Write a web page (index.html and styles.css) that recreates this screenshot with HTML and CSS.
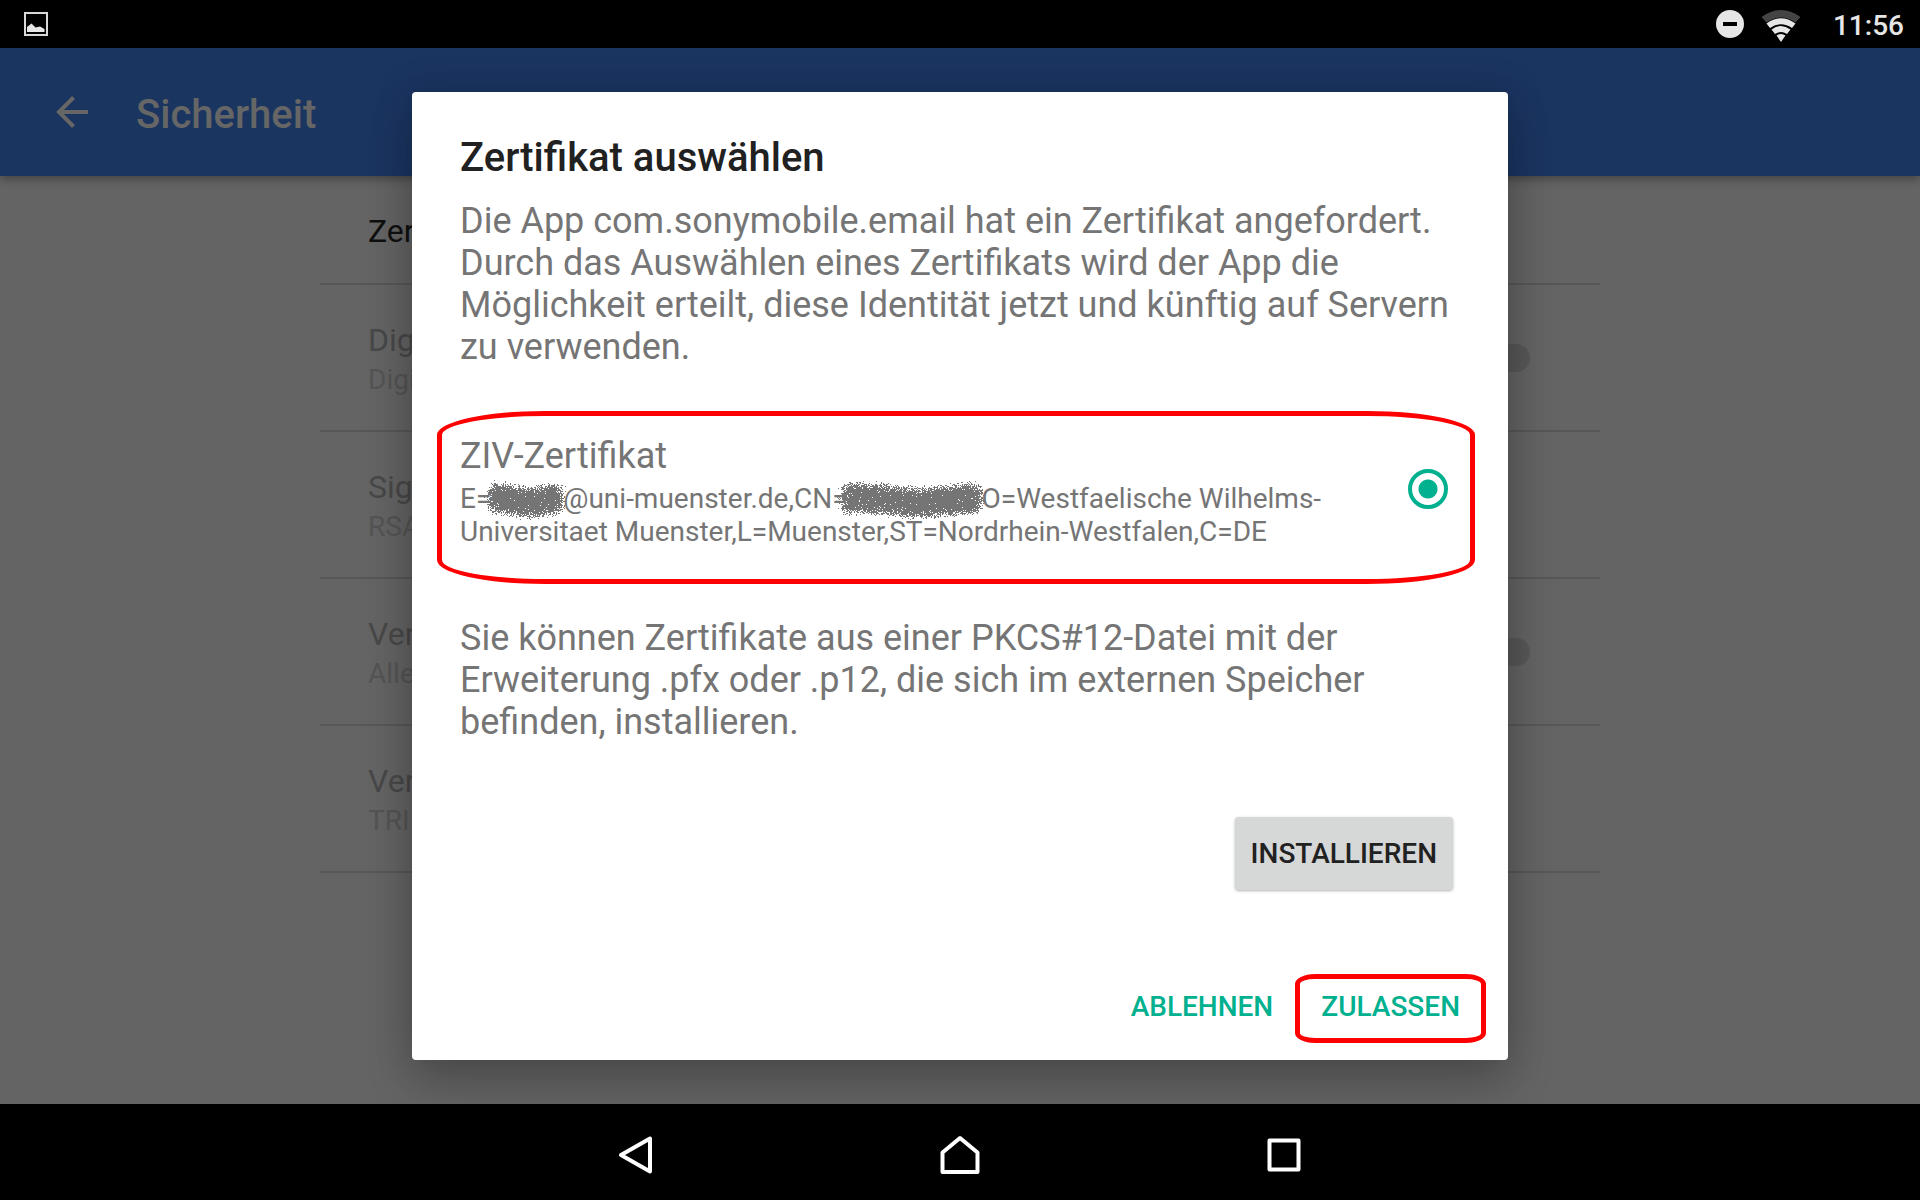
FILE: index.html
```html
<!DOCTYPE html>
<html lang="de">
<head>
<meta charset="utf-8">
<meta name="viewport" content="width=device-width, initial-scale=1">
<title>Sicherheit</title>
<link rel="stylesheet" href="styles.css">
</head>
<body>
<div class="status-bar">
  <svg width="24" height="24" viewBox="0 0 24 24" aria-hidden="true">
    <rect x="1" y="1" width="22" height="22" fill="none" stroke="#d8d8d8" stroke-width="2"/>
    <path d="M3 20V15L7.500 11.500 11.500 15.500 16 14.500 20.500 17V20Z" fill="#e6e6e6"/>
  </svg>
  <div class="status-icons">
    <svg width="28" height="28" viewBox="0 0 28 28" aria-hidden="true">
      <circle cx="14" cy="14" r="14" fill="#e6e6e6"/>
      <rect x="7" y="12" width="14" height="4" fill="#000"/>
    </svg>
    <svg class="wifi" width="40" height="32" viewBox="0 0 40 32" aria-hidden="true">
      <path d="M0.500 7Q20-7 39.500 7L34.500 12.500Q20 2.500 5.500 12.500Z" fill="#444"/>
      <path d="M5.500 13.500Q20 3 34.500 13.500L31 18Q20 10.500 9 18Z" fill="#e6e6e6"/>
      <path d="M10.500 19.500Q20 12.500 29.500 19.500L26 24Q20 20 14 24Z" fill="#e6e6e6"/>
      <path d="M15.500 25.500Q20 22.500 24.500 25.500L20 32Z" fill="#e6e6e6"/>
    </svg>
    <time class="clock">11:56</time>
  </div>
</div>

<div class="screen">
  <header class="app-bar">
    <button class="back" type="button" aria-label="Zurück">
      <svg width="32" height="32" viewBox="0 0 32 32" aria-hidden="true"><path d="M32 16H3M17.500 1.500L3 16 17.500 30.500" fill="none" stroke="#666" stroke-width="4"/></svg>
    </button>
    <h1 class="app-title">Sicherheit</h1>
  </header>
  <main class="settings">
    <h2 class="section">Zer</h2>
    <div class="setting"><div><p class="name">Dig</p><p class="hint">Digi</p></div><span class="switch"></span></div>
    <div class="setting"><div><p class="name">Sig</p><p class="hint">RSA</p></div></div>
    <div class="setting"><div><p class="name">Ver</p><p class="hint">Alle</p></div><span class="switch"></span></div>
    <div class="setting"><div><p class="name">Ver</p><p class="hint">TRI</p></div></div>
  </main>

  <div class="overlay">
    <section class="dialog" role="dialog" aria-labelledby="dialog-title">
      <h2 class="dialog-title" id="dialog-title">Zertifikat auswählen</h2>
      <p class="text">Die App com.sonymobile.email hat ein Zertifikat angefordert. Durch das Auswählen eines Zertifikats wird der App die Möglichkeit erteilt, diese Identität jetzt und künftig auf Servern zu verwenden.</p>
      <label class="option" for="cert">
        <span class="option-text">
          <span class="option-name">ZIV-Zertifikat</span>
          <span class="option-detail">E=<span class="redacted short"><canvas width="84" height="40"></canvas></span>@uni-muenster.de,CN=<span class="redacted long"><canvas width="150" height="40"></canvas></span>O=Westfaelische Wilhelms-Universitaet Muenster,L=Muenster,ST=Nordrhein-Westfalen,C=DE</span>
        </span>
        <input class="radio" id="cert" type="radio" name="cert" checked>
      </label>
      <p class="text">Sie können Zertifikate aus einer PKCS#12-Datei mit der Erweiterung .pfx oder .p12, die sich im externen Speicher befinden, installieren.</p>
      <button class="install" type="button">INSTALLIEREN</button>
      <div class="actions">
        <button class="action" type="button">ABLEHNEN</button>
        <button class="action marked" type="button">ZULASSEN</button>
      </div>
    </section>
  </div>
</div>

<nav class="nav-bar">
  <button type="button" aria-label="Zurück"><svg width="40" height="40" viewBox="0 0 40 40" aria-hidden="true"><path d="M34 3.500V36.500L5 20Z"/></svg></button>
  <button type="button" aria-label="Startbildschirm"><svg width="40" height="40" viewBox="0 0 40 40" aria-hidden="true"><path d="M2.500 17.500L20 3 37.500 17.500V37H2.500Z"/></svg></button>
  <button type="button" aria-label="Übersicht"><svg width="40" height="40" viewBox="0 0 40 40" aria-hidden="true"><path d="M5.500 5.500H34.500V34.500H5.500Z"/></svg></button>
</nav>
<script src="redact.js"></script>
</body>
</html>
```
FILE: styles.css
```css
* { box-sizing: border-box; }

body {
  margin: 0;
  min-height: 100vh;
  display: grid;
  grid-template-rows: 48px 1fr 96px;
  background: #000;
  font-family: Roboto, "Liberation Sans", sans-serif;
}

h1, h2, p { margin: 0; font-weight: 400; }

button {
  margin: 0;
  padding: 0;
  border: 0;
  background: none;
  font-family: inherit;
}

svg { display: block; }

.status-bar {
  display: flex;
  align-items: center;
  justify-content: space-between;
  padding: 0 16px 0 24px;
}

.status-icons { display: flex; align-items: center; }
.wifi { margin: 4px 32px 0 17px; }

.clock {
  color: #e6e6e6;
  font-size: 28px;
  font-weight: 500;
  line-height: 32px;
  padding-top: 3px;
}

.screen {
  position: relative;
  overflow: hidden;
  background: #646464;
}

.app-bar {
  display: flex;
  align-items: center;
  gap: 48px;
  height: 128px;
  padding: 0 56px;
  background: #1b3561;
  box-shadow: 0 2px 10px rgba(0, 0, 0, 0.4);
}

.app-title {
  color: #666;
  font-size: 40px;
  font-weight: 500;
  line-height: 48px;
  padding-top: 5px;
}

.settings {
  width: 66.667%;
  margin: 0 auto;
}

.section {
  height: 109px;
  padding: 36px 48px 0;
  border-bottom: 2px solid #575757;
  color: #101010;
  font-size: 32px;
  line-height: 38px;
}

.setting {
  display: flex;
  align-items: center;
  justify-content: space-between;
  height: 147px;
  padding: 0 70px 0 48px;
  border-bottom: 2px solid #575757;
}

.name {
  padding-top: 4px;
  color: #484848;
  font-size: 32px;
  line-height: 40px;
}

.hint {
  color: #545454;
  font-size: 28px;
  line-height: 40px;
}

.switch {
  width: 56px;
  height: 28px;
  border-radius: 14px;
  background: #585858;
}

.overlay {
  position: absolute;
  inset: 0;
  display: grid;
  place-items: center;
}

.dialog {
  display: flex;
  flex-direction: column;
  width: 1096px;
  max-width: 92%;
  padding: 41px 48px 18px;
  border-radius: 4px;
  background: #fff;
  box-shadow: 0 0 40px rgba(0, 0, 0, 0.16), 0 24px 48px rgba(0, 0, 0, 0.2);
}

.dialog-title {
  margin-bottom: 17px;
  color: #212121;
  font-size: 40px;
  font-weight: 500;
  line-height: 50px;
}

.text, .option-name {
  color: #757575;
  font-size: 36px;
  line-height: 42px;
}

.option {
  position: relative;
  display: flex;
  align-items: center;
  justify-content: space-between;
  margin: 44px 0 45px;
  padding: 23px 12px 24px 0;
}

.option::after,
.marked::after {
  content: "";
  position: absolute;
  border: 5px solid #f00;
  pointer-events: none;
}

.option::after {
  inset: -1px -15px -12px -23px;
  border-radius: 108px / 24px;
}

.option-text { flex: 0 1 900px; }
.option-name { display: block; }

.option-detail {
  display: block;
  padding-top: 5px;
  color: #757575;
  font-size: 28px;
  line-height: 33px;
}

.redacted {
  position: relative;
  display: inline-block;
  height: 20px;
}

.redacted canvas {
  position: absolute;
  right: -4px;
  top: -8px;
}

.short { width: 72px; }
.long { width: 134px; }

.radio {
  appearance: none;
  flex: none;
  width: 40px;
  height: 40px;
  margin: 0 0 6px;
  border: 4px solid #00b08e;
  border-radius: 50%;
  background: radial-gradient(circle, #00b08e 9px, transparent 10px);
}

.install {
  align-self: flex-end;
  height: 73px;
  margin: 74px 7px 80px 0;
  padding: 0 16px;
  border-radius: 4px;
  background: #d6d7d7;
  box-shadow: 0 1px 3px rgba(0, 0, 0, 0.3);
  color: #212121;
  font-size: 28px;
  font-weight: 500;
}

.actions {
  display: flex;
  justify-content: flex-end;
  gap: 16px;
  margin-right: -16px;
}

.action {
  position: relative;
  height: 72px;
  padding: 0 16px;
  color: #00b08e;
  font-size: 28px;
  font-weight: 500;
}

.marked::after {
  inset: 4px -10px -1px;
  border-radius: 20px / 10px;
}

.nav-bar {
  display: flex;
  align-items: center;
  justify-content: center;
  gap: 284px;
  padding-top: 6px;
}

.nav-bar path {
  fill: none;
  stroke: #fff;
  stroke-width: 4;
  stroke-linejoin: round;
}
```
FILE: redact.js
```js
// Sprays grey speckle over the redacted parts of the certificate subject.
let seed = 7;
function random() {
  seed = (seed * 16807) % 2147483647;
  return seed / 2147483647;
}

document.querySelectorAll(".redacted canvas").forEach((canvas) => {
  const ctx = canvas.getContext("2d");
  const w = canvas.width;
  ctx.fillStyle = "#757575";
  for (let i = 0; i < w * 75; i++) {
    const t = random();
    const x = 9 + t * (w - 18);
    const y = 20 + 2 * Math.sin(t * 7 + 4);
    const angle = random() * Math.PI * 2;
    const r = (random() + random()) / 2;
    ctx.fillRect(
      Math.round(x + Math.cos(angle) * r * 10),
      Math.round(y + Math.sin(angle) * r * 18),
      1, 1
    );
  }
});
```
